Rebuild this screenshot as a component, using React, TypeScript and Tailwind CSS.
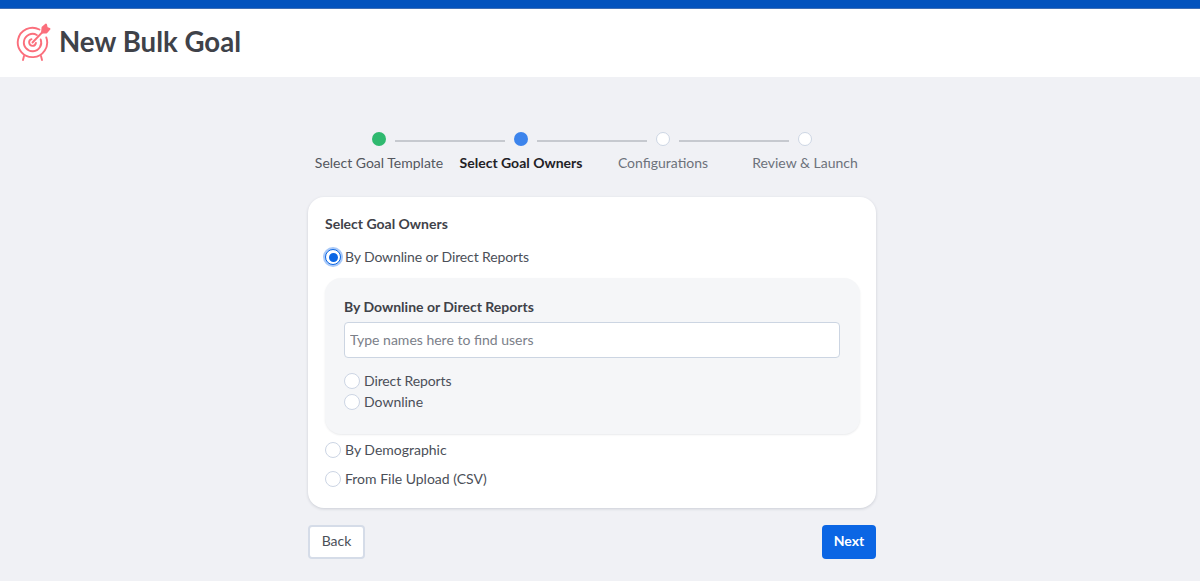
import { useState } from "react";

const FONT = "font-['Lato','Open_Sans',sans-serif]";

const STEPS = [
  { label: "Select Goal Template", state: "done" },
  { label: "Select Goal Owners", state: "active" },
  { label: "Configurations", state: "todo" },
  { label: "Review & Launch", state: "todo" },
];

const OWNER_OPTIONS = ["downline", "demographic", "csv"];

function TargetIcon() {
  return (
    <svg width="36" height="40" viewBox="0 0 36 40" fill="none" stroke="#FB6F7C" strokeWidth="1.9" strokeLinecap="round" strokeLinejoin="round">
      {/* rings, open toward the arrow */}
      <path d="M23.4 7.5A14.7 14.7 0 1 0 30.3 15.5" />
      <path d="M20.85 13A8.7 8.7 0 1 0 24.7 17.5" />
      <path d="M15.5 17.2A3.4 3.4 0 1 0 19.9 21" />
      {/* arrow */}
      <path d="M16.5 20.5L27 9.5" />
      <path d="M26 10.5L26.5 5.5L30 2.5L30.8 6L33.5 7L30.5 10.5Z" fill="#FB6F7C" />
      {/* legs */}
      <path d="M8 34L7 38" />
      <path d="M25 34L26 38" />
    </svg>
  );
}

function Radio({ checked, label, tight, onSelect }: { checked?: boolean; label: string; tight?: boolean; onSelect?: () => void }) {
  return (
    <label className="flex items-center gap-1 cursor-pointer" onClick={onSelect}>
      {checked ? (
        <span className="flex h-4 w-4 shrink-0 items-center justify-center rounded-full border-[1.5px] border-[#0b66e4] bg-white shadow-[0_0_0_2px_#a9c9f8]">
          <span className="h-[9px] w-[9px] rounded-full bg-[#0b66e4]" />
        </span>
      ) : (
        <span className="h-4 w-4 shrink-0 rounded-full border-[1.5px] border-[#ccd5e4] bg-white" />
      )}
      <span className={`text-[14px] leading-5 text-[#4b4f58] ${tight ? "tracking-[-0.12px]" : ""}`}>{label}</span>
    </label>
  );
}

export default function App() {
  const [owner, setOwner] = useState(OWNER_OPTIONS[0]);

  return (
    <div className={`${FONT} flex h-[581px] w-full flex-col overflow-hidden bg-[#f0f1f5]`}>
      <div className="h-[9px] border-b border-[#3f6fb5] bg-[#0353bd]" />
      <header className="flex h-[68px] items-center gap-[7px] bg-white pb-[2px] pl-[16px]">
        <TargetIcon />
        <h1 className="text-[27.6px] font-bold leading-none text-[#3f4249]">New Bulk Goal</h1>
      </header>

      <div className="pr-4">
        <main className="mx-auto flex w-[568px] flex-col pt-[55px]">
          {/* stepper */}
          <div className="flex justify-center">
            {STEPS.map((s, i) => (
              <div key={s.label} className="relative flex w-[142px] flex-col items-center">
                {i > 0 && <div className="absolute left-[-55px] top-[8px] h-[2px] w-[110px] bg-[#c6c9cf]" />}
                {s.state === "done" && <span className="h-[14px] w-[14px] rounded-full bg-[#2fb96f]" />}
                {s.state === "active" && <span className="h-[14px] w-[14px] rounded-full bg-[#3c84ec]" />}
                {s.state === "todo" && <span className="h-[14px] w-[14px] rounded-full border-[1.5px] border-[#cdd6e4] bg-white" />}
                <span
                  className={`mt-[8px] whitespace-nowrap text-[14px] leading-[18px] ${
                    s.state === "active" ? "font-bold text-[#1f2126]" : s.state === "done" ? "text-[#54575e]" : "text-[#6d727b]"
                  }`}
                >
                  {s.label}
                </span>
              </div>
            ))}
          </div>

          {/* card */}
          <section className="mt-[25px] flex h-[311px] flex-col rounded-2xl bg-white pl-[17px] pr-[16px] pt-[19px] shadow-[0_1px_3px_rgba(40,50,70,0.18)]">
            <h2 className="text-[14px] font-bold leading-4 text-[#3f4249]">Select Goal Owners</h2>
            <div className="mt-[15px]">
              <Radio tight checked={owner === "downline"} label="By Downline or Direct Reports" onSelect={() => setOwner("downline")} />
            </div>
            <div className="mt-[11px] h-[156px] rounded-2xl bg-[#f5f6f8] pl-[19px] pr-[20px] pt-[21px] shadow-[0_1px_2px_rgba(40,50,70,0.1)]">
              <div className="text-[14px] font-bold leading-4 text-[#3f4249]">By Downline or Direct Reports</div>
              <input
                placeholder="Type names here to find users"
                className="mt-[7px] h-9 w-full rounded border-[1.5px] border-[#ccd5e2] bg-white px-[5px] pb-[2px] text-[14px] text-[#4b4f58] outline-none placeholder:text-[#7b8089]"
              />
              <div className="mt-[13px] flex flex-col gap-[1px]">
                <Radio tight label="Direct Reports" />
                <Radio label="Downline" />
              </div>
            </div>
            <div className="mt-[6px] flex flex-col gap-[9px]">
              <Radio checked={owner === "demographic"} label="By Demographic" onSelect={() => setOwner("demographic")} />
              <Radio checked={owner === "csv"} label="From File Upload (CSV)" onSelect={() => setOwner("csv")} />
            </div>
          </section>

          {/* footer buttons */}
          <div className="mt-[17px] flex justify-between">
            <button className="h-[34px] w-[57px] rounded border-2 border-[#d5dce8] bg-white pb-[3px] text-[14px] text-[#4b4f58]">Back</button>
            <button className="h-[34px] w-[54px] rounded bg-[#0b66e4] pb-[3px] text-[14px] font-bold text-white">Next</button>
          </div>
        </main>
      </div>
    </div>
  );
}
